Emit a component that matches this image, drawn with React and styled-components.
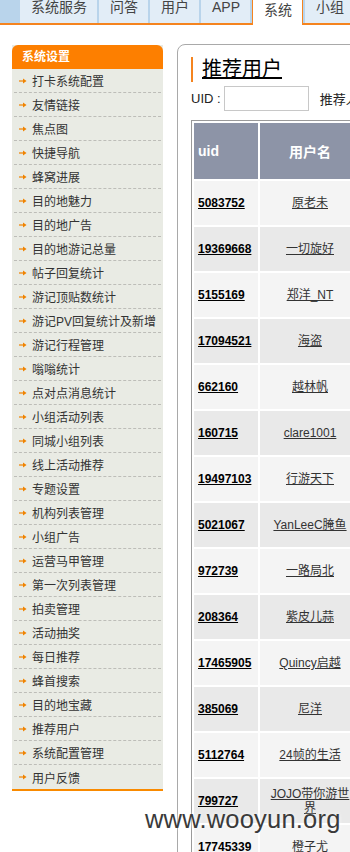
import React from "react";
import styled, { createGlobalStyle } from "styled-components";

const GlobalStyle = createGlobalStyle`
  html, body {
    margin: 0;
    padding: 0;
    background: #fff;
    overflow: hidden;
  }
  body {
    font-family: "Liberation Sans", "Noto Sans CJK SC", sans-serif;
    color: #333;
  }
`;

const Page = styled.div`
  position: relative;
  width: 640px;
  height: 852px;
  overflow: hidden;
`;

const TabBar = styled.div`
  display: flex;
  align-items: flex-start;
  gap: 2px;
  height: 23px;
  padding-left: 20px;
  background: #b9d4eb;
  border-bottom: 2px solid #f5841f;
`;

const Tab = styled.div`
  height: ${p => (p.$active ? "25px" : "23px")};
  margin-bottom: ${p => (p.$active ? "-2px" : "0")};
  padding: ${p => (p.$active ? "3px 10px 0 11px" : "0 10px 0 11px")};
  box-sizing: border-box;
  background: ${p => (p.$active ? "#fff" : "#e2edf7")};
  border-left: ${p => (p.$active ? "1px solid #f5841f" : "none")};
  border-right: ${p => (p.$active ? "1px solid #f5841f" : "none")};
  font-size: 14px;
  line-height: 15px;
  color: #444;
  white-space: nowrap;
  position: relative;
  z-index: 1;
`;

const Body = styled.div`
  display: flex;
  align-items: flex-start;
`;

const Sidebar = styled.div`
  width: 151px;
  margin: 20px 0 0 12px;
  background: #e9ebe4;
  border-bottom: 2px solid #f98a00;
  flex-shrink: 0;
`;

const SideHeader = styled.div`
  height: 24px;
  line-height: 24px;
  padding-left: 10px;
  background: #fd7f00;
  border-radius: 6px 6px 0 0;
  color: #fff;
  font-weight: bold;
  font-size: 12px;
`;

const SideList = styled.ul`
  list-style: none;
  margin: 0;
  padding: 0 2px;
`;

const SideItem = styled.li`
  display: flex;
  align-items: center;
  height: 23px;
  padding-left: 5px;
  border-bottom: 1px dashed #bdbdb8;
  font-size: 12px;
  color: #333;
  &:last-child {
    border-bottom: none;
    height: 24px;
  }
`;

const ArrowWrap = styled.span`
  display: inline-flex;
  width: 13px;
  flex-shrink: 0;
`;

const Panel = styled.div`
  margin: 19px 0 0 14px;
  width: 460px;
  height: 900px;
  border: 1px solid #a9a9a9;
  border-radius: 8px 0 0 0;
  padding: 12px 0 0 13px;
  box-sizing: border-box;
`;

const Title = styled.h2`
  margin: 0;
  height: 25px;
  line-height: 25px;
  border-left: 2px solid #f5841f;
  padding-left: 9px;
  font-size: 20px;
  font-weight: normal;
  color: #000;
  text-decoration: underline;
`;

const SearchRow = styled.div`
  display: flex;
  align-items: center;
  margin-top: 4px;
  font-size: 13px;
  color: #222;
`;

const UidInput = styled.input`
  width: 85px;
  height: 25px;
  box-sizing: border-box;
  margin-left: 3px;
  border: 1px solid #c8c8c8;
`;

const SearchLabel = styled.span`
  margin-left: 11px;
  white-space: nowrap;
`;

const Table = styled.table`
  margin-top: 9px;
  border-collapse: separate;
  border-spacing: 2px;
  border-left: 1px solid #9a9a9a;
  border-top: 1px solid #9a9a9a;
  font-size: 12px;
`;

const Th = styled.th`
  height: 56px;
  width: ${p => p.$w}px;
  padding: ${p => (p.$left ? "0 0 0 4px" : "0")};
  background: #8d94a7;
  color: #fff;
  font-size: 14px;
  font-weight: bold;
  text-align: ${p => (p.$left ? "left" : "center")};
  box-sizing: border-box;
`;

const Td = styled.td`
  height: 44px;
  padding: ${p => (p.$left ? "0 0 0 4px" : "0 6px")};
  background: ${p => (p.$odd ? "#f4f4f4" : "#e9e9e9")};
  text-align: ${p => (p.$left ? "left" : "center")};
  line-height: 14px;
  box-sizing: border-box;
`;

const UidLink = styled.a`
  color: #000;
  font-weight: bold;
  text-decoration: underline;
`;

const NameLink = styled.a`
  color: #333;
  text-decoration: underline;
`;

const Watermark = styled.div`
  position: absolute;
  left: 145px;
  top: 807px;
  font-size: 25.5px;
  line-height: 1;
  color: #3a3a3a;
  letter-spacing: 0.2px;
  text-shadow: 0 0 4px rgba(255, 255, 255, 0.9);
  pointer-events: none;
`;

const tabs = ["系统服务", "问答", "用户", "APP", "系统", "小组", "目的地"];

const menu = [
  "打卡系统配置",
  "友情链接",
  "焦点图",
  "快捷导航",
  "蜂窝进展",
  "目的地魅力",
  "目的地广告",
  "目的地游记总量",
  "帖子回复统计",
  "游记顶贴数统计",
  "游记PV回复统计及新增",
  "游记行程管理",
  "嗡嗡统计",
  "点对点消息统计",
  "小组活动列表",
  "同城小组列表",
  "线上活动推荐",
  "专题设置",
  "机构列表管理",
  "小组广告",
  "运营马甲管理",
  "第一次列表管理",
  "拍卖管理",
  "活动抽奖",
  "每日推荐",
  "蜂首搜索",
  "目的地宝藏",
  "推荐用户",
  "系统配置管理",
  "用户反馈"
];

const users = [
  ["5083752", "原老未"],
  ["19369668", "一切旋好"],
  ["5155169", "郑洋_NT"],
  ["17094521", "海盗"],
  ["662160", "越林帆"],
  ["160715", "clare1001"],
  ["19497103", "行游天下"],
  ["5021067", "YanLeeC腌鱼"],
  ["972739", "一路局北"],
  ["208364", "紫皮儿蒜"],
  ["17465905", "Quincy启越"],
  ["385069", "尼洋"],
  ["5112764", "24帧的生活"],
  ["799727", "JOJO带你游世界"],
  ["17745339", "橙子尤"]
];

const Arrow = () => (
  <svg width="8" height="6" viewBox="0 0 8 6">
    <path d="M0 3h4" stroke="#f08300" strokeWidth="1.2" />
    <polygon points="4,0.5 7.5,3 4,5.5" fill="#f08300" />
  </svg>
);

const App = () => {
  return (
    <Page>
      <GlobalStyle />
      <TabBar>
        {tabs.map(t => (
          <Tab key={t} $active={t === "系统"}>
            {t}
          </Tab>
        ))}
      </TabBar>
      <Body>
        <Sidebar>
          <SideHeader>系统设置</SideHeader>
          <SideList>
            {menu.map(m => (
              <SideItem key={m}>
                <ArrowWrap>
                  <Arrow />
                </ArrowWrap>
                {m}
              </SideItem>
            ))}
          </SideList>
        </Sidebar>
        <Panel>
          <Title>推荐用户</Title>
          <SearchRow>
            UID :
            <UidInput />
            <SearchLabel>推荐人 :</SearchLabel>
          </SearchRow>
          <Table>
            <thead>
              <tr>
                <Th $w={64} $left>
                  uid
                </Th>
                <Th $w={100}>用户名</Th>
                <Th $w={120}>推荐时间</Th>
              </tr>
            </thead>
            <tbody>
              {users.map(([uid, name], i) => (
                <tr key={uid}>
                  <Td $left $odd={i % 2 === 0}>
                    <UidLink>{uid}</UidLink>
                  </Td>
                  <Td $odd={i % 2 === 0}>
                    <NameLink>{name}</NameLink>
                  </Td>
                  <Td $odd={i % 2 === 0}>2014-08-01</Td>
                </tr>
              ))}
            </tbody>
          </Table>
        </Panel>
      </Body>
      <Watermark>www.wooyun.org</Watermark>
    </Page>
  );
};

export default App;
